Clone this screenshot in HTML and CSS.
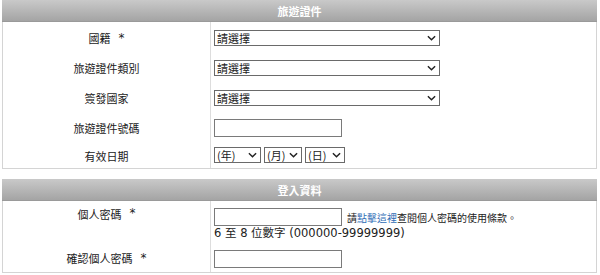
FILE: index.html
```html
<!DOCTYPE html>
<html lang="zh-Hant">
<head>
    <meta charset="UTF-8">
    <meta name="viewport" content="width=device-width, initial-scale=1.0">
    <title>旅遊證件</title>
    <link rel="stylesheet" href="styles.css">
</head>
<body>
    <div class="form">
        <section class="panel">
            <div class="panel-head">旅遊證件</div>
            <div class="row">
                <div class="label">國籍<span class="star">*</span></div>
                <div class="field">
                    <span class="sel wide"><select><option>請選擇</option></select><svg class="chev" viewBox="0 0 10 6"><path d="M1 1 L5 5 L9 1" /></svg></span>
                </div>
            </div>
            <div class="row">
                <div class="label">旅遊證件類別</div>
                <div class="field">
                    <span class="sel wide"><select><option>請選擇</option></select><svg class="chev" viewBox="0 0 10 6"><path d="M1 1 L5 5 L9 1" /></svg></span>
                </div>
            </div>
            <div class="row">
                <div class="label">簽發國家</div>
                <div class="field">
                    <span class="sel wide"><select><option>請選擇</option></select><svg class="chev" viewBox="0 0 10 6"><path d="M1 1 L5 5 L9 1" /></svg></span>
                </div>
            </div>
            <div class="row">
                <div class="label">旅遊證件號碼</div>
                <div class="field"><input type="text" class="txt"></div>
            </div>
            <div class="row last">
                <div class="label">有效日期</div>
                <div class="field dates">
                    <span class="sel year"><select><option>(年)</option></select><svg class="chev" viewBox="0 0 10 6"><path d="M1 1 L5 5 L9 1" /></svg></span>
                    <span class="sel month"><select><option>(月)</option></select><svg class="chev" viewBox="0 0 10 6"><path d="M1 1 L5 5 L9 1" /></svg></span>
                    <span class="sel day"><select><option>(日)</option></select><svg class="chev" viewBox="0 0 10 6"><path d="M1 1 L5 5 L9 1" /></svg></span>
                </div>
            </div>
        </section>

        <section class="panel">
            <div class="panel-head">登入資料</div>
            <div class="row tall">
                <div class="label top">個人密碼<span class="star">*</span></div>
                <div class="field stack">
                    <div class="line"><input type="password" class="txt"><span class="note">請<a href="#">點擊這裡</a>查閱個人密碼的使用條款。</span></div>
                    <div class="hint">6 至 8 位數字 (000000-99999999)</div>
                </div>
            </div>
            <div class="row confirm">
                <div class="label">確認個人密碼<span class="star">*</span></div>
                <div class="field"><input type="password" class="txt"></div>
            </div>
        </section>
    </div>
</body>
</html>
```

FILE: styles.css
```css
body{margin: 0;background-color: #fff;color: #222;font-family: "Noto Sans CJK TC", "Liberation Sans", sans-serif;font-size: 11px;}

        .form{
            width: 595px;
            margin-left: 2px;
        }
        .panel{
            border: 1px solid #d4d4d4;
            border-top: none;
            margin-bottom: 10px;
        }
        .panel-head{
            height: 22px;
            line-height: 22px;
            margin: 0 -1px;
            background: linear-gradient(#c9c9c9, #a4a4a4);
            border-bottom: 1px solid #9a9a9a;
            box-sizing: border-box;
            color: #fff;
            font-weight: 700;
            text-align: center;
        }
        .row{
            display: grid;
            grid-template-columns: 208px 1fr;
            height: 30px;
        }
        .row.last{
            height: 26px;
        }
        .row.tall{
            height: 42px;
        }
        .row.confirm{
            height: 29px;
        }
        .label{
            border-right: 1px solid #ddd;
            display: flex;
            align-items: center;
            justify-content: center;
            padding-top: 1px;
        }
        .label.top{
            align-items: flex-start;
            padding-top: 5px;
        }
        .star{
            margin-left: 8px;
            font-family: "DejaVu Sans", sans-serif;
            font-size: 12px;
        }
        .field{
            display: flex;
            align-items: center;
            padding-left: 3px;
            padding-top: 2px;
        }
        .field.dates{
            gap: 3px;
            padding-top: 0;
        }
        .field.stack{
            flex-direction: column;
            align-items: flex-start;
            padding-top: 7px;
        }
        .line{
            display: flex;
            align-items: center;
        }
        .note{
            margin-left: 5px;
            font-size: 10px;
        }
        .note a{
            color: #2f6db5;
            text-decoration: none;
        }
        .hint{
            font-size: 11.5px;
            line-height: 15px;
            font-family: "DejaVu Sans", "Noto Sans CJK TC", sans-serif;
        }
        .sel{
            position: relative;
            display: inline-block;
            height: 16px;
        }
        .sel select{
            appearance: none;
            width: 100%;
            height: 16px;
            margin: 0;
            padding: 0 2px;
            border: 1px solid #6a6a6a;
            border-radius: 0;
            background-color: #fff;
            color: #222;
            font-family: inherit;
            font-size: 11px;
            line-height: 14px;
            box-sizing: border-box;
        }
        .chev{
            position: absolute;
            right: 4px;
            top: 5px;
            width: 9px;
            height: 6px;
            fill: none;
            stroke: #222;
            stroke-width: 1.6;
            pointer-events: none;
        }
        .sel.wide{
            width: 226px;
        }
        .sel.year{
            width: 47px;
        }
        .sel.month{
            width: 38px;
        }
        .sel.day{
            width: 40px;
        }
        .txt{
            width: 128px;
            height: 18px;
            margin: 0;
            padding: 0 2px;
            border: 1px solid #7a7a7a;
            border-radius: 0;
            box-sizing: border-box;
            outline: none;
        }
```
